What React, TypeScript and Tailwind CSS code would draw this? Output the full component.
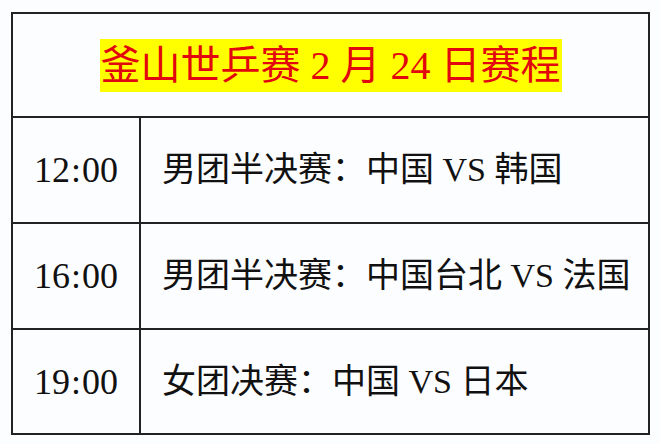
const rows = [
    { time: ["19", "00"], match: "女团决赛：中国 VS 日本" },
];

const font = { fontFamily: '"Liberation Serif", "Noto Sans CJK SC", serif' };

function Time({ h, m }: { h: string; m: string }) {
    return (
        <span className="text-[36px] leading-none text-[#111]">
            {h}
            <span className="mx-[1px]">:</span>
            {m}
        </span>
    );
}

export default function App() {
    const schedule = [
        { h: "12", m: "00", match: "男团半决赛：中国 VS 韩国" },
        { h: "16", m: "00", match: "男团半决赛：中国台北 VS 法国" },
        { h: rows[0].time[0], m: rows[0].time[1], match: rows[0].match },
    ];

    return (
        <div
            className="w-[660px] h-[444px] bg-[#fcfdff] pt-[12px] pl-[11px]"
            style={font}
        >
            <div className="w-[639px] border-2 border-[#222] flex flex-col">
                <div className="h-[104px] flex items-center justify-center border-b-2 border-[#222]">
                    <span className="bg-[#ffff00] text-[#e2060e] text-[40px] leading-[53px] px-[1px]">
                        釜山世乒赛 2 月 24 日赛程
                    </span>
                </div>
                {schedule.map((row, i) => (
                    <div
                        key={row.h}
                        className={
                            i < schedule.length - 1
                                ? "h-[106px] flex border-b-2 border-[#222]"
                                : "h-[103px] flex"
                        }
                    >
                        <div className="w-[128px] border-r-2 border-[#222] flex items-center justify-center">
                            <Time h={row.h} m={row.m} />
                        </div>
                        <div className="flex-1 flex items-center pl-[21px] text-[34px] text-[#111] leading-none">
                            {row.match}
                        </div>
                    </div>
                ))}
            </div>
        </div>
    );
}
